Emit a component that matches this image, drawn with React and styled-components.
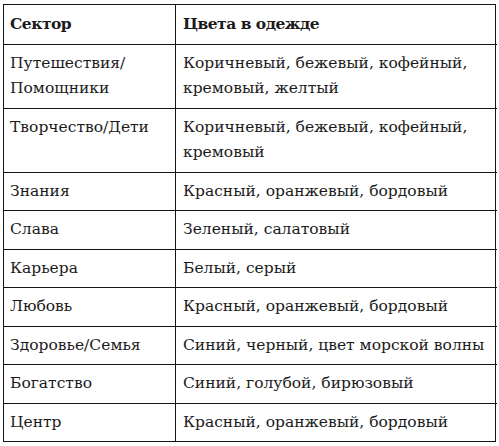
import React from "react";
import styled, { createGlobalStyle } from "styled-components";

const Global = createGlobalStyle`
  html, body { margin: 0; padding: 0; background: #fff; }
`;

const Page = styled.div`
  padding: 4px 3px 0 3px;
  width: 499px;
  box-sizing: border-box;
`;

const Table = styled.div`
  display: grid;
  grid-template-columns: 171px 322px;
  border: 1.5px solid #151515;
  width: 493px;
  box-sizing: border-box;
  font-family: 'DejaVu Serif', 'Liberation Serif', serif;
  color: #1b1b1b;
`;

const Cell = styled.div`
  padding: ${(p) => (p.$head ? "6px 6px 7px" : "6px 6px 6px")};
  padding-left: ${(p) => (p.$right ? "7px" : "6px")};
  border-bottom: ${(p) => (p.$last ? "none" : "1.5px solid #151515")};
  border-left: ${(p) => (p.$right ? "1.5px solid #151515" : "none")};
  font-size: 15.5px;
  line-height: 25.5px;
  font-weight: ${(p) => (p.$head ? 700 : 400)};
  letter-spacing: ${(p) => (p.$head ? "-0.5px" : "0")};
  white-space: pre-line;
`;

const rows = [
  ["Путешествия/\nПомощники", "Коричневый, бежевый, кофейный,\nкремовый, желтый"],
  ["Творчество/Дети", "Коричневый, бежевый, кофейный,\nкремовый"],
  ["Знания", "Красный, оранжевый, бордовый"],
  ["Слава", "Зеленый, салатовый"],
  ["Карьера", "Белый, серый"],
  ["Любовь", "Красный, оранжевый, бордовый"],
  ["Здоровье/Семья", "Синий, черный, цвет морской волны"],
  ["Богатство", "Синий, голубой, бирюзовый"],
  ["Центр", "Красный, оранжевый, бордовый"],
];

export default function App() {
  return (
    <>
      <Global />
      <Page>
        <Table>
          <Cell $head>Сектор</Cell>
          <Cell $head $right>Цвета в одежде</Cell>
          {rows.map(([a, b], i) => (
            <React.Fragment key={i}>
              <Cell $last={i === rows.length - 1}>{a}</Cell>
              <Cell $right $last={i === rows.length - 1}>{b}</Cell>
            </React.Fragment>
          ))}
        </Table>
      </Page>
    </>
  );
}
